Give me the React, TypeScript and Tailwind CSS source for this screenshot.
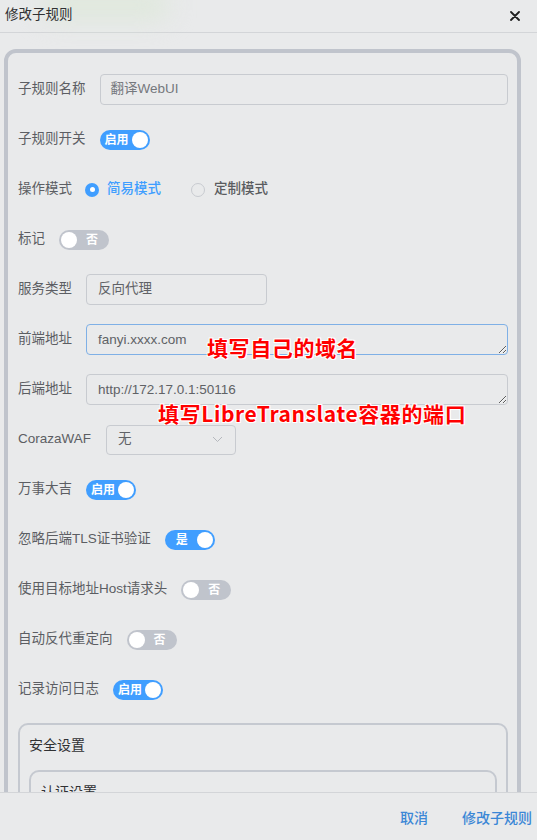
import React from "react";

const font = "font-['Liberation_Sans','Noto_Sans_CJK_SC',sans-serif]";

const Switch = ({ on, text }: { on: boolean; text: string }) => (
  <div
    className={`relative flex h-5 w-[50px] shrink-0 items-center rounded-full ${
      on ? "bg-[#409eff]" : "bg-[#c0c4cc]"
    }`}
  >
    <span
      className={`absolute top-0 flex h-5 w-[30px] items-center justify-center text-[12px] font-bold leading-none text-white ${
        on ? "left-[2px]" : "left-[18px]"
      }`}
    >
      {text}
    </span>
    <span
      className={`absolute top-[2px] h-4 w-4 rounded-full bg-white ${on ? "right-[2px]" : "left-[2px]"}`}
    />
  </div>
);

const Label = ({ children }: { children: React.ReactNode }) => (
  <span className="mr-[14px] shrink-0 whitespace-nowrap text-[13.5px] text-[#5c5e63]">{children}</span>
);

const Row = ({ children, className = "" }: { children: React.ReactNode; className?: string }) => (
  <div className={`relative mb-[19px] flex h-[31px] items-center ${className}`}>{children}</div>
);

const note =
  "pointer-events-none absolute whitespace-nowrap font-['Noto_Sans_CJK_SC',sans-serif] text-[21px] font-bold leading-[21px] tracking-[0.6px] text-[#ff0000] [text-shadow:-1px_-1px_0_#fff,1px_-1px_0_#fff,-1px_1px_0_#fff,1px_1px_0_#fff,0_0_2px_#fff]";

export default function App() {
  const switches: { label: string; on: boolean; text: string }[] = [
    { label: "万事大吉", on: true, text: "启用" },
    { label: "忽略后端TLS证书验证", on: true, text: "是" },
    { label: "使用目标地址Host请求头", on: false, text: "否" },
    { label: "自动反代重定向", on: false, text: "否" },
    { label: "记录访问日志", on: true, text: "启用" },
  ];

  return (
    <div className={`flex h-[840px] w-full flex-col overflow-hidden bg-[#e9eaeb] ${font}`}>
      {/* header */}
      <div className="relative flex h-[33px] shrink-0 items-center justify-between border-b border-[#d3d5d8] pl-[5px] pr-[17px]">
        <div className="pointer-events-none absolute left-[40px] top-[-10px] h-[30px] w-[130px] rounded-full bg-[#dfe8dc] blur-md" />
        <span className="relative -mt-[2px] text-[13.5px] text-[#303133]">修改子规则</span>
        <svg width="10" height="10" viewBox="0 0 10 10">
          <path d="M1 1L9 9M9 1L1 9" stroke="#1f1f1f" strokeWidth="1.8" strokeLinecap="round" />
        </svg>
      </div>

      {/* body */}
      <div className="min-h-0 flex-1 overflow-hidden pl-[4px] pr-[16px] pt-[16px]">
        <div className="rounded-[12px] border-4 border-[#c0c4cc] pl-[10px] pr-[9px] pt-[21px]">
          <Row>
            <Label>子规则名称</Label>
            <div className="flex h-[31px] flex-1 items-center rounded-[4px] border border-[#c8cbd0] px-[10px] text-[13.5px] text-[#75787d]">
              翻译WebUI
            </div>
          </Row>
          <Row>
            <Label>子规则开关</Label>
            <Switch on text="启用" />
          </Row>
          <Row>
            <Label>操作模式</Label>
            <span className="-ml-[1px] flex h-[14px] w-[14px] items-center justify-center rounded-full bg-[#409eff]">
              <span className="h-[5px] w-[5px] rounded-full bg-white" />
            </span>
            <span className="ml-[8px] text-[13.5px] font-medium text-[#409eff]">简易模式</span>
            <span className="ml-[30px] h-[14px] w-[14px] rounded-full border border-[#c8cbd0]" />
            <span className="ml-[9px] text-[13.5px] font-medium text-[#5a5c60]">定制模式</span>
          </Row>
          <Row>
            <Label>标记</Label>
            <Switch on={false} text="否" />
          </Row>
          <Row>
            <Label>服务类型</Label>
            <div className="flex h-[31px] w-[181px] items-center rounded-[4px] border border-[#c8cbd0] px-[11px] text-[13.5px] text-[#606266]">
              反向代理
            </div>
          </Row>
          <Row>
            <Label>前端地址</Label>
            <textarea
              readOnly
              value="fanyi.xxxx.com"
              className="block h-[31px] flex-1 resize-y rounded-[4px] border border-[#7fb0e6] bg-transparent px-[11px] py-[5px] text-[13.5px] leading-[20px] text-[#606266] outline-none"
            />
            <span className={`${note} left-[189px] top-[13px]`}>填写自己的域名</span>
          </Row>
          <Row>
            <Label>后端地址</Label>
            <textarea
              readOnly
              value="http://172.17.0.1:50116"
              className="block h-[31px] flex-1 resize-y rounded-[4px] border border-[#c8cbd0] bg-transparent px-[11px] py-[5px] text-[13.5px] leading-[20px] text-[#606266] outline-none"
            />
            <span className={`${note} left-[140px] top-[29px]`}>填写LibreTranslate容器的端口</span>
          </Row>
          <Row>
            <Label>CorazaWAF</Label>
            <div className="ml-[1px] flex h-[30px] w-[130px] items-center justify-between rounded-[4px] border border-[#c8cbd0] pl-[11px] pr-[12px] text-[13.5px] text-[#606266]">
              <span>无</span>
              <svg width="11" height="7" viewBox="0 0 11 7">
                <path d="M1 1L5.5 5.5L10 1" fill="none" stroke="#b5b8bd" strokeWidth="1" />
              </svg>
            </div>
          </Row>
          {switches.map((s, i) => (
            <Row key={i}>
              <Label>{s.label}</Label>
              <Switch on={s.on} text={s.text} />
            </Row>
          ))}

          <div className="-mt-[1px] rounded-[10px] border-2 border-[#c5c9d0] px-[9px] pt-[10px]">
            <div className="text-[14px] leading-[20px] text-[#303133]">安全设置</div>
            <div className="mt-[15px] h-[120px] rounded-[10px] border-2 border-[#c5c9d0] px-[10px] pt-[10px]">
              <div className="text-[14px] leading-[20px] text-[#303133]">认证设置</div>
            </div>
          </div>
        </div>
      </div>

      {/* footer */}
      <div className="flex h-[48px] shrink-0 items-center justify-end gap-[34px] border-t border-[#d3d5d8] pr-[5px] pt-[3px] text-[14px] font-medium text-[#3b87d6]">
        <span>取消</span>
        <span>修改子规则</span>
      </div>
    </div>
  );
}
